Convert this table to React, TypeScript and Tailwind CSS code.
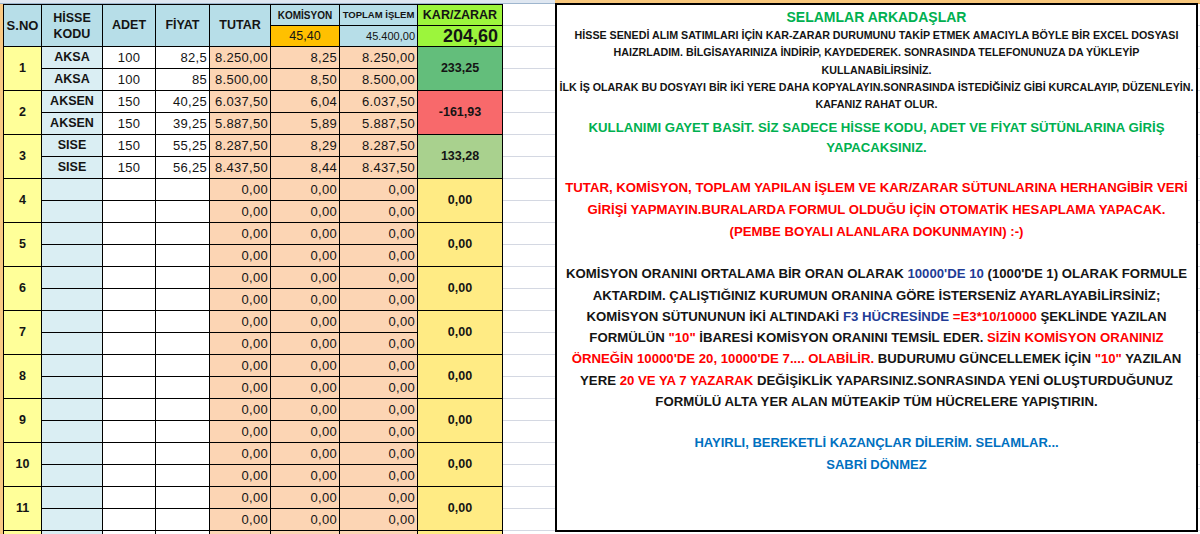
import React from 'react';

type Row = {
  kod: string;
  adet: string;
  fiyat: string;
  tutar: string;
  kom: string;
  toplam: string;
};

type Pair = {
  no: string;
  rows: Row[];
  kz: string;
  kzBg: string;
};

const emptyRow: Row = { kod: '', adet: '', fiyat: '', tutar: '0,00', kom: '0,00', toplam: '0,00' };
const blankRow: Row = { kod: '', adet: '', fiyat: '', tutar: '', kom: '', toplam: '' };

const pairs: Pair[] = [
  {
    no: '1',
    rows: [
      { kod: 'AKSA', adet: '100', fiyat: '82,5', tutar: '8.250,00', kom: '8,25', toplam: '8.250,00' },
      { kod: 'AKSA', adet: '100', fiyat: '85', tutar: '8.500,00', kom: '8,50', toplam: '8.500,00' },
    ],
    kz: '233,25',
    kzBg: 'bg-[#63be7b]',
  },
  {
    no: '2',
    rows: [
      { kod: 'AKSEN', adet: '150', fiyat: '40,25', tutar: '6.037,50', kom: '6,04', toplam: '6.037,50' },
      { kod: 'AKSEN', adet: '150', fiyat: '39,25', tutar: '5.887,50', kom: '5,89', toplam: '5.887,50' },
    ],
    kz: '-161,93',
    kzBg: 'bg-[#f8696b]',
  },
  {
    no: '3',
    rows: [
      { kod: 'SISE', adet: '150', fiyat: '55,25', tutar: '8.287,50', kom: '8,29', toplam: '8.287,50' },
      { kod: 'SISE', adet: '150', fiyat: '56,25', tutar: '8.437,50', kom: '8,44', toplam: '8.437,50' },
    ],
    kz: '133,28',
    kzBg: 'bg-[#a9d18e]',
  },
  ...['4', '5', '6', '7', '8', '9', '10', '11'].map((no) => ({
    no,
    rows: [emptyRow, emptyRow],
    kz: '0,00',
    kzBg: 'bg-[#ffeb84]',
  })),
  // row 12 is only a sliver at the bottom edge
  { no: '', rows: [blankRow, blankRow], kz: '', kzBg: 'bg-[#ffeb84]' },
];

const num = 'flex items-center justify-end pr-[2px] text-[13px] tracking-[0.3px]';

const Sheet = () => {
  return (
    <div className="grid grid-cols-[37px_60px_52px_53px_60px_68px_77px_84px] grid-rows-[20px_20px_repeat(24,21px)] gap-px bg-black p-px text-[#141414]">
      <div className="row-span-2 flex items-center justify-center bg-[#b7dee8] text-[13px] font-bold">S.NO</div>
      <div className="row-span-2 flex items-center justify-center bg-[#b7dee8] text-center text-[12.5px] font-bold leading-[16px]">
        HİSSE
        <br />
        KODU
      </div>
      <div className="row-span-2 flex items-center justify-center bg-[#b7dee8] text-[12.5px] font-bold">ADET</div>
      <div className="row-span-2 flex items-center justify-center bg-[#b7dee8] text-[12.5px] font-bold">FİYAT</div>
      <div className="row-span-2 flex items-center justify-center bg-[#b7dee8] text-[12.5px] font-bold">TUTAR</div>
      <div className="flex items-center justify-center bg-[#b7dee8] text-[10px] font-bold">KOMİSYON</div>
      <div className="flex items-center justify-center bg-[#b7dee8] text-[9.5px] font-bold">TOPLAM İŞLEM</div>
      <div className="flex items-center justify-center bg-[#9cf53c] text-[12.5px] font-bold">KAR/ZARAR</div>
      <div className="flex items-center justify-center bg-[#ffc000] text-[12.5px]">45,40</div>
      <div className="flex items-center justify-end bg-[#b7dee8] pr-[2px] text-[11px]">45.400,00</div>
      <div className="flex items-center justify-end bg-[#9cf53c] pr-[4px] text-[18px] font-bold">204,60</div>

      {pairs.map((p, pi) => (
        <React.Fragment key={pi}>
          {p.rows.map((r, i) => (
            <React.Fragment key={i}>
              {i === 0 && (
                <div className="row-span-2 flex items-center justify-center bg-[#ffff99] text-[12.5px] font-bold">
                  {p.no}
                </div>
              )}
              <div className="flex items-center justify-center bg-[#daeef3] text-[12.5px] font-bold">{r.kod}</div>
              <div className="flex items-center justify-center bg-white text-[13px] tracking-[0.3px]">{r.adet}</div>
              <div className={`${num} bg-white`}>{r.fiyat}</div>
              <div className={`${num} bg-[#fcd5b4]`}>{r.tutar}</div>
              <div className={`${num} bg-[#fcd5b4]`}>{r.kom}</div>
              <div className={`${num} bg-[#fcd5b4]`}>{r.toplam}</div>
              {i === 0 && (
                <div className={`row-span-2 flex items-center justify-center text-[12.5px] font-bold ${p.kzBg}`}>
                  {p.kz}
                </div>
              )}
            </React.Fragment>
          ))}
        </React.Fragment>
      ))}
    </div>
  );
};

const Filler = () => {
  return (
    <div className="flex flex-1 flex-col">
      <div className="h-[22px] border-b border-[#d4d8e2]" />
      <div className="h-[21px] border-b border-[#d4d8e2]" />
      {Array.from({ length: 24 }).map((_, i) => (
        <div key={i} className="h-[22px] border-b border-[#d4d8e2]" />
      ))}
    </div>
  );
};

const Red = ({ children }: { children: React.ReactNode }) => <span className="text-[#ff0000]">{children}</span>;
const Navy = ({ children }: { children: React.ReactNode }) => <span className="text-[#1f3c96]">{children}</span>;

const NoteBox = () => {
  return (
    <div className="absolute left-[555px] top-[3px] h-[529px] w-[643px] border-2 border-black bg-white text-center font-bold whitespace-nowrap text-[#141414]">
      <div className="pt-[2px] text-[14px] leading-[20px] text-[#00b050]">SELAMLAR ARKADAŞLAR</div>
      <div className="text-[10.7px] leading-[17.3px]">
        <div>HİSSE SENEDİ ALIM SATIMLARI İÇİN KAR-ZARAR DURUMUNU TAKİP ETMEK AMACIYLA BÖYLE BİR EXCEL DOSYASI</div>
        <div>HAIZRLADIM. BİLGİSAYARINIZA İNDİRİP, KAYDEDEREK. SONRASINDA TELEFONUNUZA DA YÜKLEYİP</div>
        <div>KULLANABİLİRSİNİZ.</div>
        <div>İLK İŞ OLARAK BU DOSYAYI BİR İKİ YERE DAHA KOPYALAYIN.SONRASINDA İSTEDİĞİNİZ GİBİ KURCALAYIP, DÜZENLEYİN.</div>
        <div>KAFANIZ RAHAT OLUR.</div>
      </div>
      <div className="mt-[5px] text-[13.2px] leading-[20px] text-[#00b050]">
        <div>KULLANIMI GAYET BASİT. SİZ SADECE HİSSE KODU, ADET VE FİYAT SÜTÜNLARINA GİRİŞ</div>
        <div>YAPACAKSINIZ.</div>
      </div>
      <div className="mt-[19px] text-[13.2px] leading-[22px] text-[#ff0000]">
        <div>TUTAR, KOMİSYON, TOPLAM YAPILAN İŞLEM VE KAR/ZARAR SÜTUNLARINA HERHANGİBİR VERİ</div>
        <div>GİRİŞİ YAPMAYIN.BURALARDA FORMUL OLDUĞU İÇİN OTOMATİK HESAPLAMA YAPACAK.</div>
        <div>(PEMBE BOYALI ALANLARA DOKUNMAYIN) :-)</div>
      </div>
      <div className="mt-[20px] text-[13.2px] leading-[21.2px]">
        <div>
          KOMİSYON ORANINI ORTALAMA BİR ORAN OLARAK <Navy>10000&apos;DE 10</Navy> (1000&apos;DE 1) OLARAK FORMULE
        </div>
        <div>AKTARDIM. ÇALIŞTIĞINIZ KURUMUN ORANINA GÖRE İSTERSENİZ AYARLAYABİLİRSİNİZ;</div>
        <div>
          KOMİSYON SÜTUNUNUN İKİ ALTINDAKİ <Navy>F3 HÜCRESİNDE</Navy> <Red>=E3*10/10000</Red> ŞEKLİNDE YAZILAN
        </div>
        <div>
          FORMÜLÜN <Red>&quot;10&quot;</Red> İBARESİ KOMİSYON ORANINI TEMSİL EDER. <Red>SİZİN KOMİSYON ORANINIZ</Red>
        </div>
        <div>
          <Red>ÖRNEĞİN 10000&apos;DE 20, 10000&apos;DE 7.... OLABİLİR.</Red> BUDURUMU GÜNCELLEMEK İÇİN{' '}
          <Red>&quot;10&quot;</Red> YAZILAN
        </div>
        <div>
          YERE <Red>20 VE YA 7 YAZARAK</Red> DEĞİŞİKLİK YAPARSINIZ.SONRASINDA YENİ OLUŞTURDUĞUNUZ
        </div>
        <div>FORMÜLÜ ALTA YER ALAN MÜTEAKİP TÜM HÜCRELERE YAPIŞTIRIN.</div>
      </div>
      <div className="mt-[20px] text-[13px] leading-[22px] text-[#0070c0]">
        <div>HAYIRLI, BEREKETLİ KAZANÇLAR DİLERİM. SELAMLAR...</div>
        <div>SABRİ DÖNMEZ</div>
      </div>
    </div>
  );
};

export default function App() {
  return (
    <div className="relative h-[534px] w-[1200px] overflow-hidden bg-white font-['Liberation_Sans',Arial,sans-serif]">
      <div className="flex h-[4px]">
        <div className="w-[555px] border-b border-[#9eb6ce] bg-[#dfe7f1]" />
        <div className="flex-1 border-b border-[#e2a24a] bg-[#f8c77c]" />
      </div>
      <div className="flex">
        <div className="w-[3px] bg-[#f9c983]" />
        <Sheet />
        <Filler />
      </div>
      <NoteBox />
    </div>
  );
}
